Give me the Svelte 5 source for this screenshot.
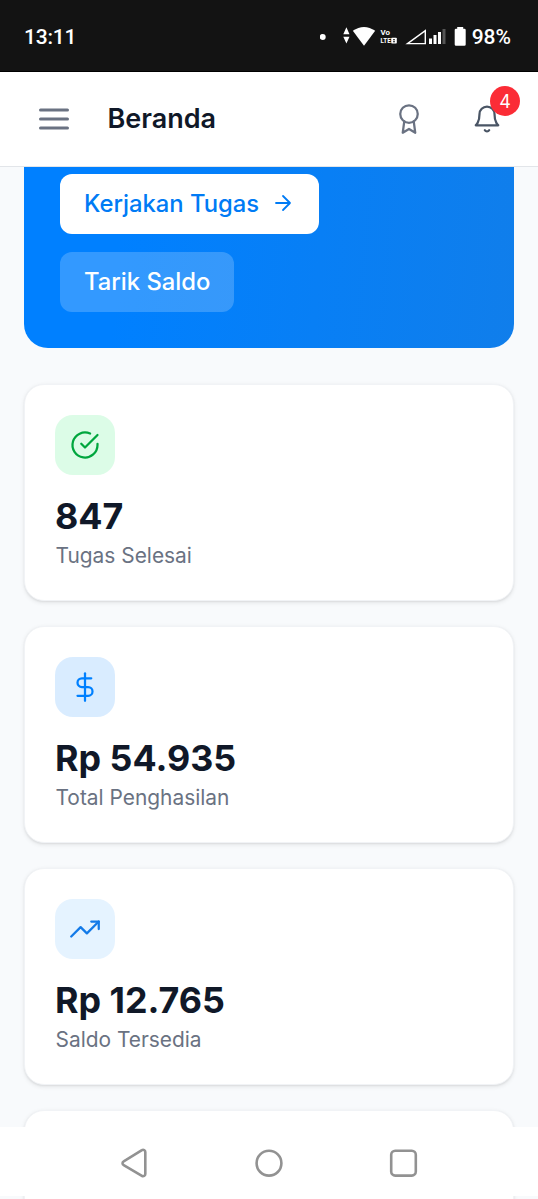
<script lang="ts">
    const title = 'Beranda';
    const notifications = 4;

    const stats = [
        { icon: 'check', tone: 'green', value: '847', label: 'Tugas Selesai' },
        { icon: 'dollar', tone: 'blue', value: 'Rp 54.935', label: 'Total Penghasilan' },
        { icon: 'trend', tone: 'sky', value: 'Rp 12.765', label: 'Saldo Tersedia' },
    ];
</script>

<div class="screen">
    <div class="statusbar">
        <span class="clock">13:11</span>
        <svg class="indicators" width="150" height="24" viewBox="320 24 150 24" fill="#fff">
            <circle cx="322.7" cy="36" r="3" />
            <path d="M343.3 33.2L346.4 26.2L349.5 33.2ZM343.3 35.8H349.5L346.4 42.4Z" />
            <path d="M352.8 29.8Q364 22.2 375.2 29.8L364 44.8Z" />
            <text x="380.5" y="34" font-size="7" textLength="9.5" lengthAdjust="spacingAndGlyphs">Vo</text>
            <text x="380.5" y="42.4" font-size="7" textLength="10.2" lengthAdjust="spacingAndGlyphs">LTE</text>
            <rect x="391.2" y="36.7" width="5.6" height="5.8" rx="0.8" />
            <path d="M393 38.3h2v1h-2zM393 40.3h2v1h-2z" fill="#131313" />
            <path d="M407.5 42.6L425.3 29.7V42.6Z" fill="none" stroke="#fff" stroke-width="1.4" />
            <path d="M429 37.5h3v5.5h-3zM433.5 34h3v9h-3zM438 31h3v12h-3z" />
            <path d="M442.5 28h3v15h-3z" fill="#555" />
            <path d="M457.2 26h6v1.7h1.2q1.3 0 1.3 1.3v14.5q0 1.3-1.3 1.3h-8.4q-1.3 0-1.3-1.3V29q0-1.3 1.3-1.3h1.2z" />
        </svg>
        <span class="battery">98%</span>
    </div>

    <header>
        <button class="menu" aria-label="Menu">
            <svg class="icon" width="36" height="36" viewBox="0 0 24 24">
                <path d="M3 6h18M3 12h18M3 18h18" />
            </svg>
        </button>
        <h1>{title}</h1>
        <button class="action" aria-label="Pencapaian">
            <svg class="icon" width="30" height="30" viewBox="0 0 24 24">
                <circle cx="12" cy="8" r="7" />
                <path d="M8.21 13.89L7 23l5-3 5 3-1.21-9.12" />
            </svg>
        </button>
        <button class="action bell" aria-label="Notifikasi">
            <svg class="icon" width="30" height="30" viewBox="0 0 24 24">
                <path d="M18 8A6 6 0 0 0 6 8c0 7-3 9-3 9h18s-3-2-3-9" />
                <path d="M13.73 21a2 2 0 0 1-3.46 0" />
            </svg>
            <span class="badge">{notifications}</span>
        </button>
    </header>

    <main>
        <section class="hero">
            <button class="primary">
                Kerjakan Tugas
                <svg class="icon" width="24" height="24" viewBox="0 0 24 24">
                    <path d="M5 12h14M12 5l7 7-7 7" />
                </svg>
            </button>
            <button class="secondary">Tarik Saldo</button>
        </section>

        {#each stats as stat}
            <article class="card">
                <div class="tile {stat.tone}">
                    <svg class="icon" width="30" height="30" viewBox="0 0 24 24">
                        {#if stat.icon === 'check'}
                            <path d="M22 11.08V12a10 10 0 1 1-5.93-9.14" />
                            <path d="M22 4L12 14.01l-3-3" />
                        {:else if stat.icon === 'dollar'}
                            <path d="M12 1v22" />
                            <path d="M17 5H9.5a3.5 3.5 0 0 0 0 7h5a3.5 3.5 0 0 1 0 7H6" />
                        {:else}
                            <path d="M23 6l-9.5 9.5-5-5L1 18" />
                            <path d="M17 6h6v6" />
                        {/if}
                    </svg>
                </div>
                <div class="value">{stat.value}</div>
                <div class="label">{stat.label}</div>
            </article>
        {/each}
        <article class="card"></article>
    </main>

    <nav>
        <svg width="36" height="36" viewBox="0 0 36 36">
            <path d="M28.3 8v22a2.2 2.2 0 0 1-3.4 1.9L6.7 21.2a2.2 2.2 0 0 1 0-3.9L24.9 6.1a2.2 2.2 0 0 1 3.4 1.9z" />
        </svg>
        <svg width="36" height="36" viewBox="0 0 36 36">
            <circle cx="18" cy="19.2" r="12.4" />
        </svg>
        <svg width="36" height="36" viewBox="0 0 36 36">
            <rect x="6.2" y="6.8" width="24.6" height="24.8" rx="4" />
        </svg>
    </nav>
</div>

<style>
    :global(body) {
        margin: 0;
        background: #f8fafc;
    }

    .screen {
        position: relative;
        display: flex;
        flex-direction: column;
        height: 1199px;
        overflow: hidden;
        background: #f8fafc;
        font-family: Inter, "Liberation Sans", sans-serif;
        color: #101828;
    }

    .statusbar {
        box-sizing: border-box;
        flex: none;
        display: flex;
        align-items: center;
        height: 72px;
        padding: 2px 27px 0 24px;
        background: #131313;
        border-bottom: 1px solid #000;
        color: #fff;
        font-family: Roboto, sans-serif;
        font-size: 21px;
        font-weight: 500;
    }

    .clock {
        flex: 1;
        letter-spacing: -0.2px;
    }

    .indicators {
        margin-right: 2px;
        font-family: Roboto, sans-serif;
        font-weight: 700;
    }

    button {
        font: inherit;
        border: none;
        background: none;
        padding: 0;
        cursor: pointer;
    }

    .icon {
        display: block;
        fill: none;
        stroke: currentColor;
        stroke-width: 1.8;
        stroke-linecap: round;
        stroke-linejoin: round;
    }

    header {
        box-sizing: border-box;
        flex: none;
        display: flex;
        align-items: center;
        height: 95px;
        padding: 0 36px;
        background: #fff;
        border-bottom: 1px solid #e2e5e9;
    }

    .menu {
        color: #6a7282;
    }

    .menu .icon {
        stroke-width: 2;
    }

    h1 {
        flex: 1;
        margin: 0 0 0 35.5px;
        font-size: 27px;
        line-height: 40px;
        font-weight: 600;
    }

    .action {
        color: #6a7282;
    }

    .bell {
        position: relative;
        margin-left: 48px;
        color: #4a5565;
    }

    .badge {
        position: absolute;
        top: -18px;
        right: -18px;
        width: 30px;
        height: 30px;
        border-radius: 50%;
        background: #fb2c36;
        color: #fff;
        font-size: 18px;
        line-height: 31px;
        text-align: center;
    }

    main {
        flex: 1;
        min-height: 0;
        display: flex;
        flex-direction: column;
        gap: 25px;
        padding: 0 24px;
        overflow: hidden;
    }

    .hero {
        box-sizing: border-box;
        flex: none;
        display: flex;
        flex-direction: column;
        align-items: flex-start;
        gap: 18px;
        height: 180.5px;
        margin-bottom: 11.5px;
        padding: 7px 36px 36px;
        border-radius: 0 0 24px 24px;
        background: linear-gradient(95deg, #0080ff 20%, #107eeb);
        font-size: 23.8px;
        font-weight: 500;
    }

    .hero button {
        display: flex;
        align-items: center;
        gap: 11.5px;
        height: 60px;
        padding: 0 24px 1px;
        border-radius: 12px;
    }

    .primary {
        background: #fff;
        color: #007bf5;
    }

    .secondary {
        background: rgba(255, 255, 255, 0.2);
        color: #fff;
    }

    .card {
        box-sizing: border-box;
        flex: none;
        height: 217px;
        padding: 30px;
        border: 1px solid #f1f3f6;
        border-radius: 20px;
        background: #fff;
        box-shadow: 0 1.5px 4px rgba(0, 0, 0, 0.08), 0 1px 2px rgba(0, 0, 0, 0.06);
    }

    .tile {
        display: grid;
        place-items: center;
        width: 60px;
        height: 59.5px;
        margin-bottom: 17px;
        border-radius: 18px;
    }

    .green {
        background: #dcfce7;
        color: #00a63e;
    }

    .blue {
        background: #d9ecff;
        color: #0080ff;
    }

    .sky {
        background: #e5f3ff;
        color: #137ae8;
    }

    .value {
        font-size: 35.8px;
        line-height: 48px;
        font-weight: 700;
    }

    .label {
        padding-left: 0.5px;
        font-size: 20.9px;
        line-height: 31.5px;
        color: #6a7282;
    }

    nav {
        position: absolute;
        left: 0;
        right: 0;
        bottom: 3px;
        display: flex;
        justify-content: center;
        align-items: center;
        gap: 98px;
        height: 69px;
        background: #fff;
    }

    nav svg {
        fill: none;
        stroke: #929292;
        stroke-width: 2.6;
    }
</style>
